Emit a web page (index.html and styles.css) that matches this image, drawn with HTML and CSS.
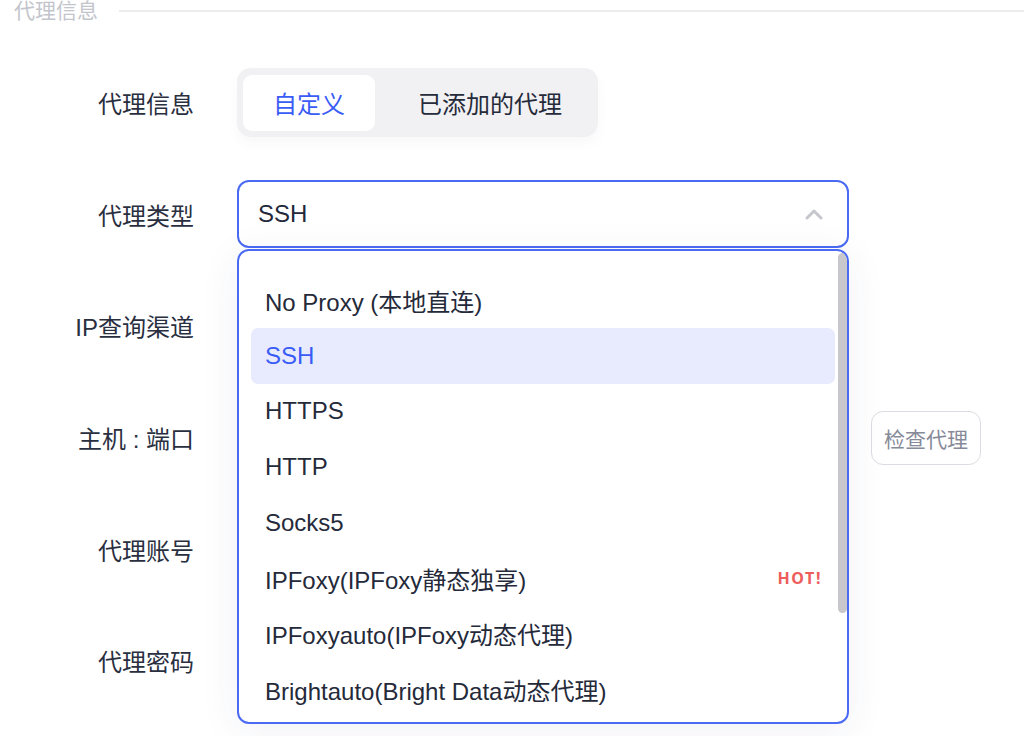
FILE: index.html
```html
<!DOCTYPE html>
<html lang="zh-CN">
<head>
<meta charset="utf-8">
<link rel="stylesheet" href="styles.css">
</head>
<body>
<div class="page">
  <div class="section-title">
    <span class="section-text">代理信息</span>
    <span class="section-line"></span>
  </div>

  <div class="form">
    <div class="row">
      <div class="label">代理信息</div>
      <div class="control">
        <div class="segmented">
          <div class="seg seg-active">自定义</div>
          <div class="seg">已添加的代理</div>
        </div>
      </div>
    </div>

    <div class="row">
      <div class="label">代理类型</div>
      <div class="control">
        <div class="select-wrap">
          <div class="select">
            <span class="select-value">SSH</span>
            <svg class="chevron" width="18" height="12" viewBox="0 0 18 12"><polyline points="2,10 9,3 16,10" fill="none" stroke="#c6c7cc" stroke-width="3" stroke-linecap="round" stroke-linejoin="round"/></svg>
          </div>
          <div class="dropdown">
            <ul class="options">
              <li class="option">No Proxy (本地直连)</li>
              <li class="option option-selected">SSH</li>
              <li class="option">HTTPS</li>
              <li class="option">HTTP</li>
              <li class="option">Socks5</li>
              <li class="option"><span>IPFoxy(IPFoxy静态独享)</span><span class="hot">HOT!</span></li>
              <li class="option">IPFoxyauto(IPFoxy动态代理)</li>
              <li class="option">Brightauto(Bright Data动态代理)</li>
            </ul>
            <div class="scroll-thumb"></div>
          </div>
        </div>
      </div>
    </div>

    <div class="row">
      <div class="label">IP查询渠道</div>
      <div class="control"></div>
    </div>

    <div class="row">
      <div class="label">主机 : 端口</div>
      <div class="control control-inline">
        <div class="hidden-input"></div>
        <button class="btn-check">检查代理</button>
      </div>
    </div>

    <div class="row">
      <div class="label">代理账号</div>
      <div class="control"></div>
    </div>

    <div class="row">
      <div class="label">代理密码</div>
      <div class="control"></div>
    </div>
  </div>
</div>
</body>
</html>
```

FILE: styles.css
```css
* {
  box-sizing: border-box;
}

html, body {
  margin: 0;
  padding: 0;
  background: #ffffff;
  overflow: hidden;
}

body {
  font-family: "Liberation Sans", "Noto Sans CJK SC", sans-serif;
  color: #262b3b;
}

.page {
  width: 1024px;
  height: 737px;
  position: relative;
}

.section-title {
  display: flex;
  align-items: center;
  gap: 21px;
  padding-left: 14px;
  margin-top: -1px;
  height: 24px;
}

.section-text {
  font-size: 21px;
  line-height: 24px;
  color: #c3c5cc;
}

.section-line {
  flex: 1;
  height: 2px;
  background: #ececef;
}

.form {
  margin-top: 24px;
  display: flex;
  flex-direction: column;
}

.row {
  display: flex;
  align-items: center;
  height: 111.6px;
}

.label {
  width: 194px;
  text-align: right;
  font-size: 24px;
  color: #2a2f3f;
  flex-shrink: 0;
  white-space: nowrap;
}

.control {
  margin-left: 43px;
  flex: 1;
  display: flex;
  align-items: center;
}

.segmented {
  display: flex;
  align-items: center;
  gap: 13px;
  background: #f1f1f3;
  border-radius: 14px;
  padding: 6px;
  height: 69px;
  box-shadow: 0 6px 14px rgba(40, 40, 70, 0.03);
}

.seg {
  height: 56px;
  display: flex;
  align-items: center;
  padding: 0 30px;
  font-size: 24px;
  color: #262b3b;
  border-radius: 9px;
}

.seg-active {
  background: #ffffff;
  color: #3a5cf6;
}

.select-wrap {
  position: relative;
  width: 612px;
}

.select {
  height: 68px;
  border: 2px solid #4a6af3;
  border-radius: 12px;
  display: flex;
  align-items: center;
  justify-content: space-between;
  padding: 0 24px 0 19px;
  background: #ffffff;
}

.select-value {
  font-size: 24px;
  color: #23283a;
}

.dropdown {
  position: absolute;
  left: 0;
  top: 69px;
  width: 612px;
  height: 475px;
  border: 2px solid #4a6af3;
  border-radius: 12px;
  background: #ffffff;
  box-shadow: 0 6px 40px rgba(40, 50, 110, 0.07);
  z-index: 10;
  overflow: hidden;
}

.options {
  list-style: none;
  margin: 0;
  padding: 21px 12px 0 12px;
}

.option {
  height: 55.6px;
  display: flex;
  align-items: center;
  justify-content: space-between;
  padding: 0 13px 0 14px;
  font-size: 24px;
  color: #252a3a;
  border-radius: 7px;
  width: 584px;
  white-space: nowrap;
}

.option-selected {
  background: #e8ebfd;
  color: #3a5cf6;
}

.hot {
  font-family: "Noto Sans", "Liberation Sans", sans-serif;
  font-weight: 700;
  font-size: 16px;
  letter-spacing: 1.6px;
  color: #ee5c5c;
}

.scroll-thumb {
  position: absolute;
  right: 0;
  top: 2px;
  width: 9px;
  height: 360px;
  border-radius: 5px;
  background: #c7c7cc;
}

.control-inline {
  gap: 22px;
}

.hidden-input {
  width: 612px;
  height: 54px;
}

.btn-check {
  width: 110px;
  height: 54px;
  border: 1.5px solid #dcdde2;
  border-radius: 12px;
  background: #ffffff;
  font-family: "Liberation Sans", "Noto Sans CJK SC", sans-serif;
  font-size: 21px;
  color: #878a98;
  padding: 0;
}
```
